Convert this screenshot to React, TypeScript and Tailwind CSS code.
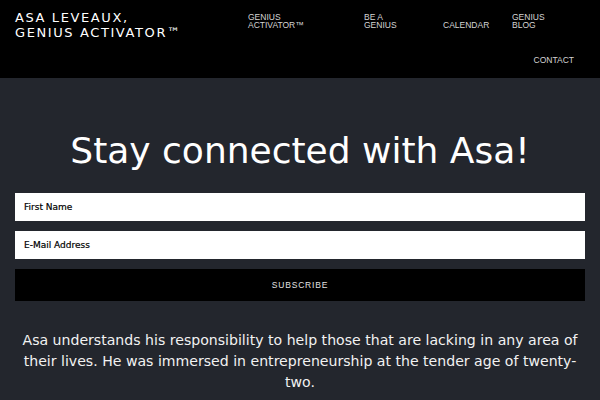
export default function App() {
  return (
    <div className="min-h-[400px] w-full bg-[#23262d] font-['DejaVu_Sans',sans-serif] text-white">
      {/* Header */}
      <header className="flex h-[78px] bg-black px-[15px]">
        <div className="w-[233px] pt-[10px] text-[13px] leading-[15px] tracking-[1.6px] text-white">
          <div>ASA LEVEAUX,</div>
          <div>GENIUS ACTIVATOR™</div>
        </div>
        <nav className="flex flex-1 flex-col pt-[12.5px] font-['Liberation_Sans',sans-serif] text-[8.5px] leading-[8.5px] text-[#d4d4d4]">
          <div className="flex items-end">
            <div className="w-[116px]">GENIUS<br />ACTIVATOR™</div>
            <div className="w-[79px]">BE A<br />GENIUS</div>
            <div className="w-[69px]">CALENDAR</div>
            <div className="w-[50px]">GENIUS<br />BLOG</div>
          </div>
          <div className="mt-[26px] flex justify-end pr-[11px]">
            <div>CONTACT</div>
          </div>
        </nav>
      </header>

      {/* Signup */}
      <section className="px-[15px]">
        <h1 className="mt-[55px] text-center text-[36px] leading-none text-white">Stay connected with Asa!</h1>
        <form className="mt-[24px] flex flex-col gap-[10px]">
          <input
            className="h-[28px] w-full bg-white px-[9px] text-[9px] text-black outline-none placeholder:text-black [-webkit-text-stroke:0.2px_black]"
            placeholder="First Name"
          />
          <input
            className="h-[28px] w-full bg-white px-[9px] text-[9px] text-black outline-none placeholder:text-black [-webkit-text-stroke:0.2px_black]"
            placeholder="E-Mail Address"
          />
          <button
            type="button"
            className="h-[32px] w-full bg-black font-['Liberation_Sans',sans-serif] text-[8.5px] tracking-[0.8px] text-[#e0e0e0]"
          >
            SUBSCRIBE
          </button>
        </form>
        <p className="mt-[29px] text-center text-[14.1px] leading-[21px] text-[#f2f2f2]">
          Asa understands his responsibility to help those that are lacking in any area of their lives. He was immersed in
          entrepreneurship at the tender age of twenty-two.
        </p>
      </section>
    </div>
  );
}
